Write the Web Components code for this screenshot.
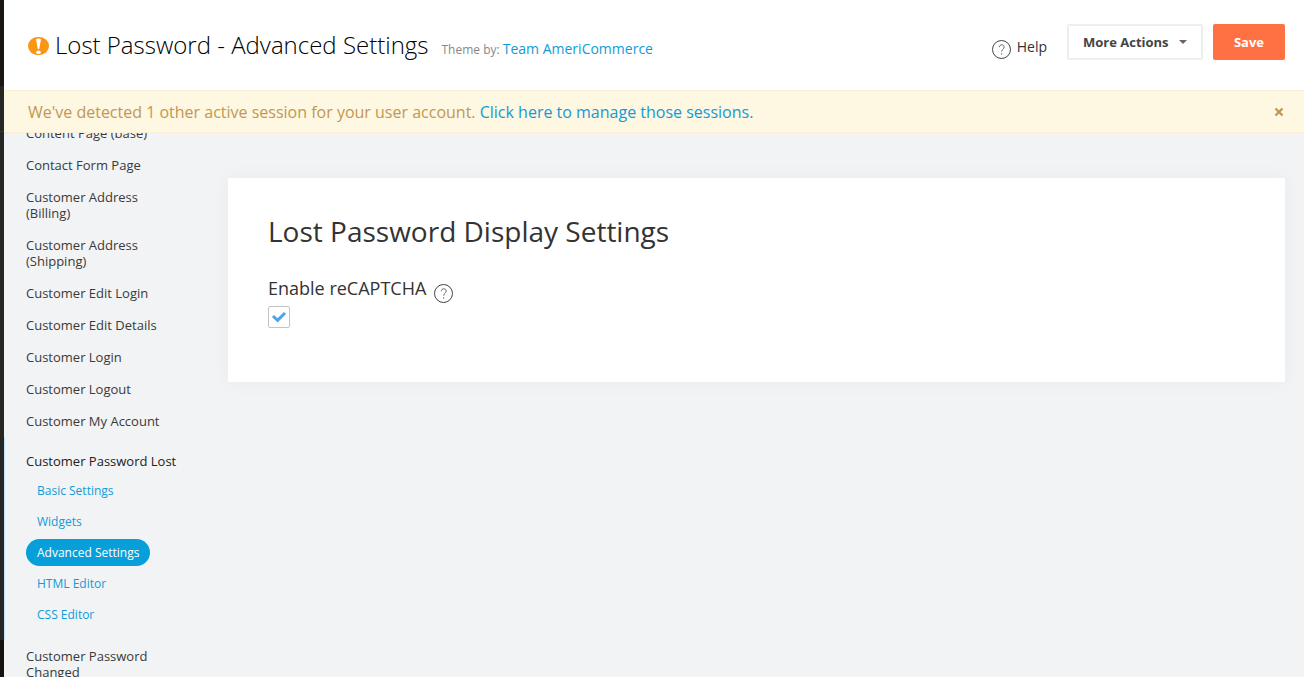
<!DOCTYPE html>
<html lang="en">
<head>
<meta charset="utf-8">
<meta name="viewport" content="width=device-width, initial-scale=1">
<title>Lost Password - Advanced Settings</title>
<style>
html, body { margin: 0; height: 100%; }
body { font-family: "Open Sans", sans-serif; color: #333; background: #f1f3f5; overflow: hidden; }
</style>
</head>
<body>
<admin-shell>
  <page-header slot="header" heading="Lost Password - Advanced Settings" author="Team AmeriCommerce"></page-header>
  <session-notice slot="notice">We've detected 1 other active session for your user account. <a slot="link" href="#sessions">Click here to manage those sessions.</a></session-notice>
  <side-nav slot="nav">
    <nav-item>Content Page (base)</nav-item>
    <nav-item>Contact Form Page</nav-item>
    <nav-item>Customer Address (Billing)</nav-item>
    <nav-item>Customer Address (Shipping)</nav-item>
    <nav-item>Customer Edit Login</nav-item>
    <nav-item>Customer Edit Details</nav-item>
    <nav-item>Customer Login</nav-item>
    <nav-item>Customer Logout</nav-item>
    <nav-item>Customer My Account</nav-item>
    <nav-group>
      <nav-item slot="title" current>Customer Password Lost</nav-item>
      <nav-pill>Basic Settings</nav-pill>
      <nav-pill>Widgets</nav-pill>
      <nav-pill active>Advanced Settings</nav-pill>
      <nav-pill>HTML Editor</nav-pill>
      <nav-pill>CSS Editor</nav-pill>
    </nav-group>
    <nav-item>Customer Password Changed</nav-item>
  </side-nav>
  <settings-card heading="Lost Password Display Settings">
    <check-field label="Enable reCAPTCHA" checked></check-field>
  </settings-card>
</admin-shell>

<script>
const define = (name, render) => customElements.define(name, class extends HTMLElement {
  constructor() {
    super();
    this.attachShadow({ mode: "open" });
  }
  connectedCallback() {
    const template = document.createElement("template");
    template.innerHTML = render(this);
    this.shadowRoot.replaceChildren(template.content.cloneNode(true));
  }
});

define("admin-shell", () => `
  <style>
    :host { display: grid; grid-template-columns: 4px minmax(0, 1fr); height: 100vh; }
    .rail { display: flex; flex-direction: column; background: #15120f; }
    .rail i { background: #262623; }
    .rail .top { flex: 0 0 86px; background: #191613; }
    .rail .mid { flex: 0 0 45px; border-bottom: 1px solid #383835; }
    .rail .low { flex: 0 0 508px; }
    .page { display: flex; flex-direction: column; min-height: 0; }
    .body { flex: 1; min-height: 0; display: grid; grid-template-columns: 180px minmax(0, 1fr); gap: 44px; overflow: hidden; }
    main { padding: 45px 19px 0 0; }
  </style>
  <div class="rail"><i class="top"></i><i class="mid"></i><i class="low"></i></div>
  <div class="page">
    <slot name="header"></slot>
    <slot name="notice"></slot>
    <div class="body"><slot name="nav"></slot><main><slot></slot></main></div>
  </div>`);

define("help-icon", () => `
  <style>
    :host { display: block; width: 20px; height: 20px; }
    svg { display: block; }
  </style>
  <svg width="20" height="20" viewBox="0 0 20 20" fill="none" stroke="#444" aria-hidden="true">
    <circle cx="9.5" cy="9.5" r="9"/>
    <path stroke-width=".8" d="M7.3 7.200c.1-1.600 1.100-2.400 2.500-2.400s2.400.9 2.400 2.200c0 2.100-2.500 2.200-2.500 4.700M9.700 13.200v1.500"/>
  </svg>`);

define("page-header", el => `
  <style>
    :host { display: flex; align-items: flex-start; justify-content: space-between; height: 90px; padding: 0 19px 0 24px; box-sizing: border-box; background: #fff; }
    .title { display: flex; align-items: baseline; padding-top: 27px; }
    svg { display: block; }
    .mark { align-self: flex-start; padding-top: 10px; margin-right: 6px; }
    h1 { margin: 0 13px 0 0; font-size: 24px; line-height: 36px; font-weight: 300; color: #000; white-space: nowrap; }
    .by { font-size: 12px; color: #888; white-space: nowrap; }
    a { color: #119bd7; text-decoration: none; }
    .by a { font-size: 14px; }
    .actions { display: flex; padding-top: 24px; }
    .help { display: flex; gap: 5px; margin-right: 20px; font-size: 14px; line-height: 20px; color: #333; padding-top: 13px; }
    help-icon { margin-top: 3px; }
    button { height: 36px; box-sizing: border-box; border: 0; border-radius: 2px; font: 700 13px/20px "Open Sans", sans-serif; cursor: pointer; }
    .more { display: flex; align-items: center; gap: 8px; padding: 0 15px 0 14px; padding: 0 14px; min-width: 136px; justify-content: space-between; margin-right: 10px; border: 2px solid #eee; background: #fff; color: #444; }
    .save { width: 72px; background: #ff7043; color: #fff; }
  </style>
  <div class="title">
    <svg class="mark" width="21" height="18" viewBox="0 0 21 18" aria-hidden="true">
      <rect width="21" height="18" rx="9.5" ry="9" fill="#fa9614"/>
      <path d="M8 2.200Q10.500.6 13 2.200L11.200 12H9.800Z" fill="#fff"/>
      <ellipse cx="10.500" cy="15.200" rx="2.300" ry="1.800" fill="#fff"/>
    </svg>
    <h1>${el.getAttribute("heading")}</h1>
    <span class="by">Theme by: <a href="#author">${el.getAttribute("author")}</a></span>
  </div>
  <div class="actions">
    <a class="help" href="#help"><help-icon></help-icon>Help</a>
    <button class="more" type="button">More Actions
      <svg width="8" height="4" viewBox="0 0 8 4" aria-hidden="true"><path d="M0 0h8L4 4z" fill="#666"/></svg>
    </button>
    <button class="save" type="button">Save</button>
  </div>`);

define("session-notice", () => `
  <style>
    :host { display: flex; align-items: center; justify-content: space-between; height: 43px; box-sizing: border-box; padding: 0 19px 0 24px; border: solid #fbeed5; border-width: 1px 0; background: #fef7e2; color: #c09853; font-size: 16px; line-height: 24px; }
    p { margin: 0; }
    ::slotted(a) { color: #119bd7; text-decoration: none; }
    button { display: flex; padding: 1px; border: 0; background: none; cursor: pointer; }
  </style>
  <p><slot></slot><slot name="link"></slot></p>
  <button type="button" aria-label="Dismiss">
    <svg width="10" height="10" viewBox="0 0 10 10" stroke="#c09853" stroke-width="2.4" aria-hidden="true"><path d="M1.500 1.500l7 7M8.500 1.500l-7 7"/></svg>
  </button>`);

define("side-nav", () => `
  <style>
    :host { display: block; min-height: 0; overflow: hidden; }
    nav { margin-top: -16px; }
  </style>
  <nav aria-label="Theme pages"><slot></slot></nav>`);

define("nav-item", el => `
  <style>
    :host { display: block; padding: 8px 0 8px 22px; font-size: 13px; line-height: 16px; }
    a { color: ${el.hasAttribute("current") ? "#222" : "#3a3a3a"}; text-decoration: none; }
  </style>
  <a href="#page"><slot></slot></a>`);

define("nav-group", () => `
  <style>
    :host { display: block; padding: 8px 0; box-shadow: inset 1px 0 #bfe3fa; }
    .list { display: flex; flex-direction: column; align-items: flex-start; gap: 4px; padding: 0 0 4px 22px; }
  </style>
  <slot name="title"></slot>
  <div class="list"><slot></slot></div>`);

define("nav-pill", el => `
  <style>
    :host { display: block; }
    a { display: block; padding: 0 11px; border-radius: 14px; font-size: 12px; line-height: 27px; color: #119bd7; text-decoration: none; white-space: nowrap; }
    .active { background: #079fd9; color: #fff; }
  </style>
  <a href="#section" class="${el.hasAttribute("active") ? "active" : ""}"><slot></slot></a>`);

define("settings-card", el => `
  <style>
    :host { display: block; padding: 33px 40px 54px; background: #fff; box-shadow: 0 0 20px rgba(0, 0, 0, .04); }
    h2 { margin: 0 0 25px; font-size: 28px; line-height: 40px; font-weight: 400; color: #333; }
  </style>
  <h2>${el.getAttribute("heading")}</h2>
  <slot></slot>`);

define("check-field", el => `
  <style>
    :host { display: block; }
    .row { display: flex; gap: 8px; height: 30px; }
    label { font-size: 18px; line-height: 24px; color: #333; }
    help-icon { margin-top: 8px; }
    .box { display: grid; width: 22px; height: 22px; }
    input, svg { grid-area: 1 / 1; }
    input { appearance: none; margin: 0; width: 22px; height: 22px; box-sizing: border-box; border: 1px solid #c4c4c4; border-radius: 2px; background: #fff; }
    svg { visibility: hidden; pointer-events: none; z-index: 1; }
    input:checked + svg { visibility: visible; }
  </style>
  <div class="row"><label for="box">${el.getAttribute("label")}</label><help-icon></help-icon></div>
  <span class="box">
    <input id="box" type="checkbox" ${el.hasAttribute("checked") ? "checked" : ""}>
    <svg width="22" height="22" viewBox="0 0 22 22" fill="none" stroke="#4ba3e8" stroke-width="3" aria-hidden="true"><path d="M5 10l4.600 4.300L17 7"/></svg>
  </span>`);
</script>
</body>
</html>
